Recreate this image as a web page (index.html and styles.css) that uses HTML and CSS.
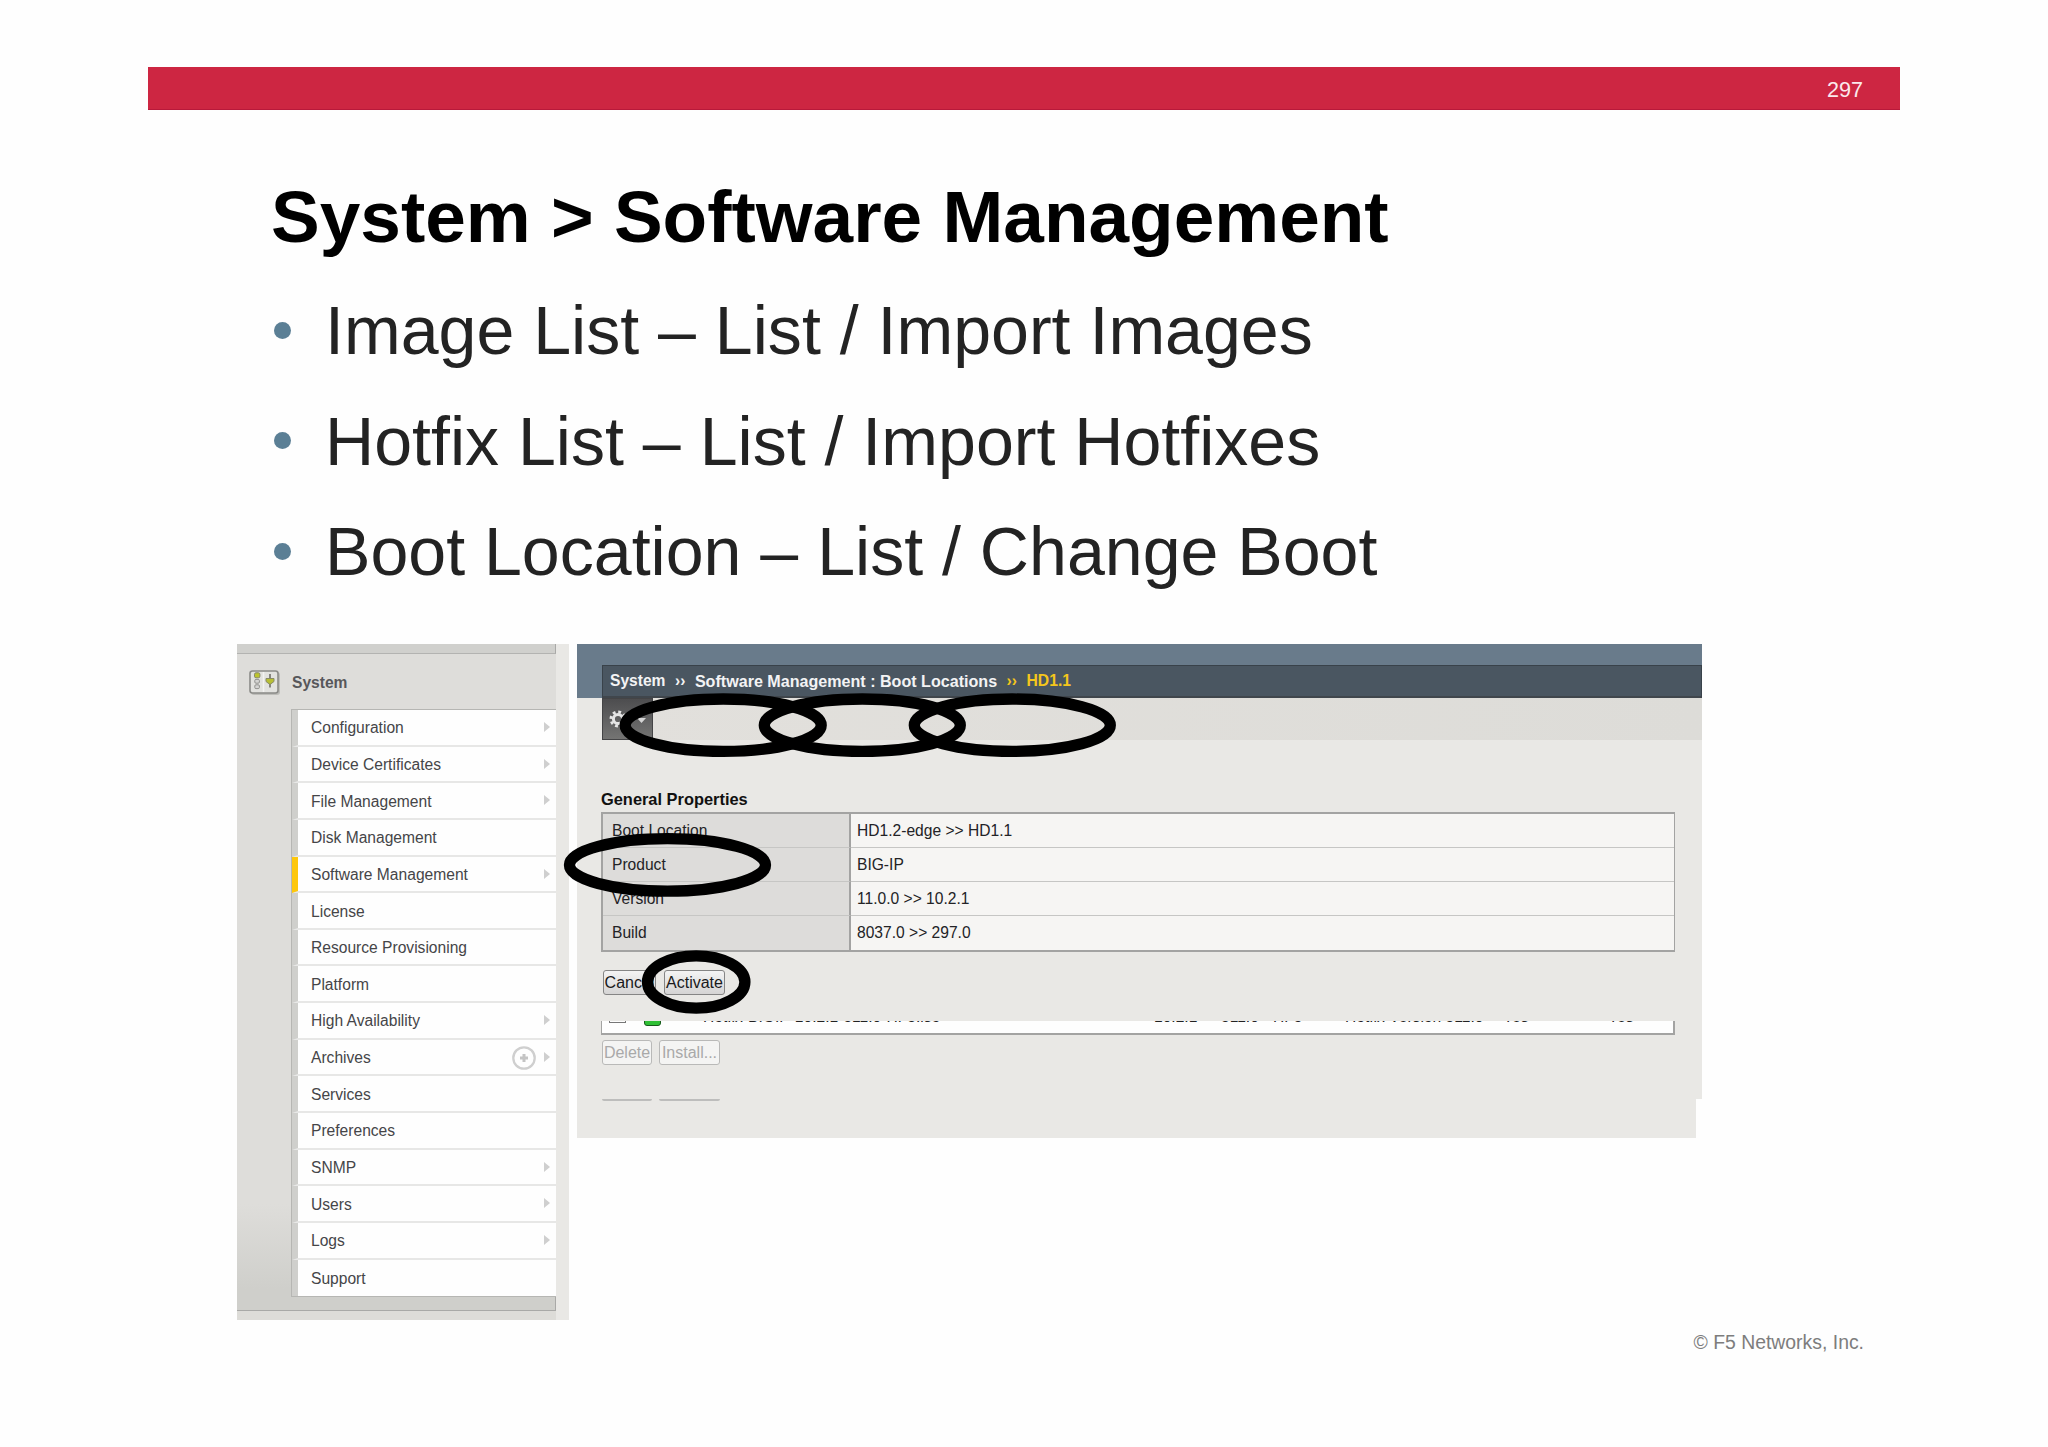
FILE: index.html
```html
<!DOCTYPE html>
<html lang="en">

<head>
    <meta charset="UTF-8">
    <meta name="viewport" content="width=device-width, initial-scale=1.0">
    <title>System &gt; Software Management</title>
    <link rel="stylesheet" href="styles.css">
</head>

<body>
    <header class="topbar">297</header>

    <section class="intro">
        <h1>System &gt; Software Management</h1>
        <ul class="bullets">
            <li>Image List – List / Import Images</li>
            <li>Hotfix List – List / Import Hotfixes</li>
            <li>Boot Location – List / Change Boot</li>
        </ul>
    </section>

    <section class="screens">
        <aside class="sidebar">
            <div class="groove"></div>
            <div class="sidebar-title">
                <svg class="system-icon" width="34" height="28" viewBox="0 0 34 28">
                    <rect x="3" y="3" width="29" height="23" rx="3" fill="#bdbdb9"/>
                    <rect x="2" y="2" width="28" height="22" rx="2.5" fill="#e2e2df" stroke="#8b8b88" stroke-width="1.6"/>
                    <path d="M15.5 3v20" stroke="#f3f3f1" stroke-width="1.5"/>
                    <rect x="6.5" y="3.8" width="5.4" height="5" rx="1.5" fill="#bcc42c" stroke="#85866a"/>
                    <rect x="6.8" y="10.4" width="4.6" height="3.8" rx="1.2" fill="#d5d5d3" stroke="#92928f"/>
                    <rect x="6.8" y="15.8" width="4.6" height="3.8" rx="1.2" fill="#d5d5d3" stroke="#92928f"/>
                    <path d="M22 5v13.5" stroke="#85857f" stroke-width="2"/>
                    <path d="M18 9.5h8v3l-4 3-4-3z" fill="#b7bf35" stroke="#888a66"/>
                </svg>
                <span>System</span>
            </div>
            <ul class="menu">
                <li class="sub">Configuration</li>
                <li class="sub">Device Certificates</li>
                <li class="sub">File Management</li>
                <li>Disk Management</li>
                <li class="sub active">Software Management</li>
                <li>License</li>
                <li>Resource Provisioning</li>
                <li>Platform</li>
                <li class="sub">High Availability</li>
                <li class="sub">Archives
                    <svg class="add" width="26" height="26" viewBox="0 0 26 26">
                        <circle cx="13" cy="13" r="10.7" fill="none" stroke="#cfcfcf" stroke-width="2.3"/>
                        <path d="M13 9v8M9 13h8" stroke="#c4c4c4" stroke-width="3"/>
                    </svg>
                </li>
                <li>Services</li>
                <li>Preferences</li>
                <li class="sub">SNMP</li>
                <li class="sub">Users</li>
                <li class="sub">Logs</li>
                <li>Support</li>
            </ul>
            <div class="sidebar-bottom"></div>
        </aside>

        <main class="panel">
            <div class="banner">
                <div class="crumbs">
                    <span class="crumb-root">System</span>
                    <span class="sep">››</span>
                    <span class="crumb-page">Software Management : Boot Locations</span>
                    <span class="sep current">››</span>
                    <span class="current">HD1.1</span>
                </div>
            </div>
            <div class="tabs">
                <div class="gear">
                    <svg width="50" height="41" viewBox="0 0 50 41">
                        <circle cx="15" cy="20" r="4.6" fill="none" stroke="#e6e6e6" stroke-width="3"/>
                        <circle cx="15" cy="20" r="7" fill="none" stroke="#e6e6e6" stroke-width="3" stroke-dasharray="2.8 2.7"/>
                        <path d="M34 19h9l-4.500 5z" fill="#d5d5d5"/>
                    </svg>
                </div>
            </div>

            <div class="content">
                <h2>General Properties</h2>
                <table class="props">
                    <tr><th>Boot Location</th><td>HD1.2-edge &gt;&gt; HD1.1</td></tr>
                    <tr><th>Product</th><td>BIG-IP</td></tr>
                    <tr><th>Version</th><td>11.0.0 &gt;&gt; 10.2.1</td></tr>
                    <tr><th>Build</th><td>8037.0 &gt;&gt; 297.0</td></tr>
                </table>
                <div class="buttons">
                    <button class="cancel">Cancel</button>
                    <button class="activate">Activate</button>
                </div>

                <!-- bottom edge of the hotfix list, the rest is cut off -->
                <div class="hotfix-row">
                    <span class="checkbox"></span>
                    <span class="status"></span>
                    <span class="file">Hotfix-BIGIP-10.2.1-511.0-HF3.iso</span>
                    <span class="version">10.2.1</span>
                    <span class="build">511.0</span>
                    <span class="hf">HF3</span>
                    <span class="desc">Hotfix Version 511.0</span>
                    <span class="yes">Yes</span>
                    <span>Yes</span>
                </div>
                <div class="buttons disabled">
                    <button disabled>Delete</button>
                    <button disabled>Install...</button>
                </div>
            </div>
        </main>
        <div class="panel-foot"><i></i><i></i></div>

        <!-- highlight rings -->
        <svg class="rings" width="1160" height="400" viewBox="0 0 1160 400">
            <ellipse cx="486.200" cy="81.200" rx="98" ry="26.200"/>
            <ellipse cx="625.300" cy="81.200" rx="98" ry="26.200"/>
            <ellipse cx="775.300" cy="81.200" rx="98" ry="26.200"/>
            <ellipse cx="430.500" cy="220.900" rx="98" ry="26.200"/>
            <ellipse cx="459.200" cy="338" rx="48.700" ry="26.200"/>
        </svg>
    </section>

    <footer class="copyright">© F5 Networks, Inc.</footer>
</body>
</html>
```
FILE: styles.css
```css
* {
    box-sizing: border-box;
}

body {
    font-family: "Liberation Sans", Arial, sans-serif;
    width: 2048px;
    height: 1447px;
    margin: 0;
    padding: 67px 148px 0;
    background: #fefefe;
    overflow: hidden;
}

.topbar {
    height: 43px;
    padding-right: 37px;
    background: #cd2642;
    border-bottom: 1px solid #b8193a;
    color: #fbe9ec;
    font-size: 21.6px;
    line-height: 45px;
    text-align: right;
}

.intro {
    height: 534px;
    padding: 65px 0 0 123px;
}

h1 {
    margin: 0;
    font-size: 73px;
    line-height: 84px;
    color: #000;
    white-space: nowrap;
}

.bullets {
    margin: 16px 0 0;
    padding: 0;
    list-style: none;
    color: #232323;
    font-size: 68.1px;
    line-height: 110.5px;
}

.bullets li {
    display: flex;
    align-items: center;
    white-space: nowrap;
}

.bullets li::before {
    content: "";
    width: 17px;
    height: 17px;
    margin: 0 34px 0 3px;
    border-radius: 50%;
    background: #5b7f95;
}

.screens {
    position: relative;
    display: grid;
    grid-template-columns: 332px 1125px;
    grid-template-rows: 455px 1fr;
    column-gap: 8px;
    height: 677px;
    margin-left: 89px;
    font-size: 15.6px;
}

/* left menu */
.sidebar {
    grid-column: 1;
    grid-row: 1 / 3;
    height: 676px;
    border-right: 13px solid #e9e8e5;
    background: linear-gradient(#deddda 0, #deddda 560px, #cfcfcb 645px);
}

.groove {
    height: 10px;
    background: #d0d0cd;
    border-bottom: 1px solid #b3b3b1;
    border-right: 1px solid #a9a9a7;
}

.sidebar-title {
    display: flex;
    align-items: center;
    gap: 10px;
    height: 55px;
    padding: 3px 0 0 11px;
    color: #57575a;
    font-size: 15.6px;
    font-weight: bold;
}

.menu {
    height: 588px;
    margin: 0 0 0 54px;
    padding: 0;
    list-style: none;
    border: solid #b6b6b3;
    border-width: 1px 0 1px 1px;
}

.menu li {
    position: relative;
    display: flex;
    align-items: center;
    justify-content: space-between;
    height: 36.65px;
    padding: 2px 31px 0 13px;
    border-left: 6px solid #cfcfcc;
    border-bottom: 2px solid #e7e7e6;
    background: #fefefe;
    color: #454548;
}

.menu li:last-child {
    border-bottom: 0;
}

.menu .active {
    border-left-color: #fdc70c;
}

.menu .sub::after {
    content: "";
    position: absolute;
    right: 6px;
    top: 12px;
    border: solid transparent;
    border-width: 5px 0 5px 6px;
    border-left-color: #cfcfcf;
}

.add {
    margin-right: -12px;
}

.sidebar-bottom {
    height: 23px;
    border-bottom: 9px solid #dddcd8;
    background: #cfcfcb;
    box-shadow: inset -1px -1px 0 #a9a9a7;
}

/* right panel */
.panel {
    grid-column: 2;
    height: 455px;
    background: #e9e8e5;
}

.banner {
    height: 54px;
    padding: 21px 0 0 25px;
    background: #697b8b;
}

.crumbs {
    display: flex;
    align-items: center;
    height: 33px;
    padding-left: 7px;
    background: #4a5661;
    border: 1px solid #39424a;
    border-bottom: 2px solid #40464c;
    color: #f3f3f4;
    font-size: 16.1px;
    font-weight: bold;
    white-space: nowrap;
}

.crumb-root {
    font-size: 15.6px;
}

.sep {
    margin: 0 9.5px;
    font-size: 15.6px;
}

.crumbs .current {
    color: #f5c61c;
}

.crumbs .current:last-child {
    font-size: 15.7px;
}

.tabs {
    height: 42px;
    margin-left: 25px;
    background: linear-gradient(to right, #e2e0dc, #dddcd8);
}

.gear {
    width: 51px;
    height: 42px;
    background: linear-gradient(#4d4d4f, #747473);
    border: 1px solid #444446;
}

.content {
    padding: 51px 27px 0 24px;
}

h2 {
    margin: 0;
    height: 21px;
    color: #111;
    font-size: 16.4px;
    line-height: 17px;
}

.props {
    width: 1074px;
    height: 138px;
    border: 2px solid #a3a3a2;
    border-right-width: 1px;
    border-collapse: separate;
    border-spacing: 0;
    color: #232326;
}

.props th,
.props td {
    height: 34px;
    padding: 0 6px;
    border-bottom: 1px solid #c6c6c4;
    text-align: left;
    font-weight: normal;
}

.props tr:last-child > * {
    border-bottom: 0;
}

.props th {
    width: 248px;
    padding-left: 9px;
    background: #dddcda;
    border-right: 2px solid #a3a3a2;
}

.props td {
    background: #f6f5f3;
}

.buttons {
    display: flex;
    gap: 8px;
    padding: 18px 0 26px 2px;
}

button {
    height: 25px;
    padding: 0;
    border: 1.5px solid #858585;
    border-radius: 3px;
    background: linear-gradient(#f4f4f4, #d5d4d4);
    color: #19191b;
    font-family: inherit;
    font-size: 16px;
    line-height: 21px;
}

.cancel {
    width: 53px;
}

.activate {
    width: 61px;
}

.hotfix-row {
    display: flex;
    height: 14px;
    overflow: hidden;
    border: solid #a3a3a2;
    border-width: 0 2px 2px 1px;
    background: #fefefe;
    color: #222;
    line-height: 18px;
    white-space: nowrap;
}

.hotfix-row span {
    margin-top: -13px;
}

.hotfix-row .checkbox {
    width: 17px;
    height: 15px;
    margin-left: 7px;
    border: 1px solid #777;
}

.hotfix-row .status {
    width: 17px;
    height: 18px;
    margin-left: 18px;
    border: 1.5px solid #175a1b;
    border-radius: 3px;
    background: #2fbf35;
}

.hotfix-row .file {
    width: 451px;
    margin-left: 42px;
}

.hotfix-row .version {
    width: 67px;
}

.hotfix-row .build {
    width: 52px;
}

.hotfix-row .hf {
    width: 72px;
}

.hotfix-row .desc {
    width: 158px;
}

.hotfix-row .yes {
    width: 105px;
}

.disabled {
    gap: 7px;
    padding: 5px 0 0 1px;
}

.disabled button {
    width: 50px;
    border-color: #b9b9b8;
    background: #f4f4f3;
    color: #a9a9a9;
}

.disabled button + button {
    width: 61px;
}

.panel-foot {
    grid-column: 2;
    display: flex;
    gap: 7px;
    width: 1119px;
    height: 39px;
    padding-left: 25px;
    background: #e9e8e5;
}

/* lower borders of the cut off buttons */
.panel-foot i {
    width: 50px;
    height: 2px;
    background: #bdbdbc;
    border-radius: 0 0 2px 2px;
}

.panel-foot i + i {
    width: 61px;
}

.rings {
    position: absolute;
    left: 0;
    top: 0;
    fill: none;
    stroke: #000;
    stroke-width: 11.3px;
}

.copyright {
    padding: 9px 36px 0 0;
    color: #7d7d7d;
    font-size: 19.4px;
    line-height: 24px;
    text-align: right;
}
```
